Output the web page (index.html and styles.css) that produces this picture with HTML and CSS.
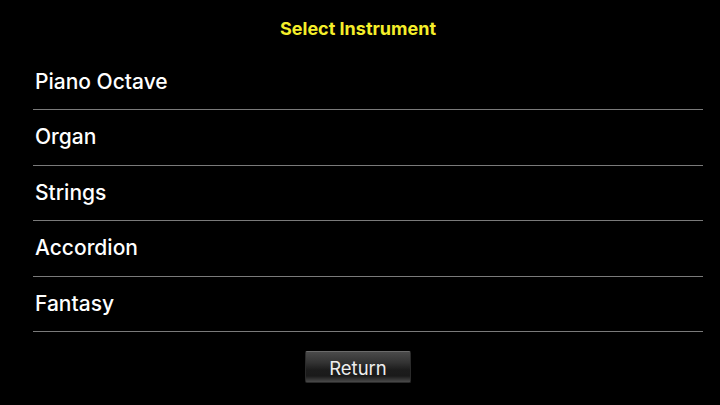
FILE: index.html
```html
<!DOCTYPE html>
<html>
<head>
<meta charset="utf-8">
<link rel="stylesheet" href="styles.css">
</head>
<body>
<div class="screen">
  <header class="title">Select Instrument</header>
  <ul class="list">
    <li class="row">Piano Octave</li>
    <li class="row">Organ</li>
    <li class="row">Strings</li>
    <li class="row">Accordion</li>
    <li class="row">Fantasy</li>
  </ul>
  <div class="actions">
    <button class="btn">Return</button>
  </div>
</div>
</body>
</html>
```

FILE: styles.css
```css
html, body {
  margin: 0;
  padding: 0;
  background: #000;
}
.screen {
  width: 720px;
  height: 405px;
  background: #000;
  font-family: "Inter", "Liberation Sans", sans-serif;
  display: flex;
  flex-direction: column;
}
.title {
  height: 54.5px;
  flex-shrink: 0;
  display: flex;
  align-items: center;
  justify-content: center;
  color: #f5ee2a;
  font-weight: 700;
  font-size: 18px;
  padding-top: 3px;
  padding-right: 4px;
  box-sizing: border-box;
}
.list {
  list-style: none;
  margin: 0 17px 0 33px;
  padding: 0;
}
.row {
  height: 55.5px;
  box-sizing: border-box;
  border-bottom: 1px solid #7a7a7a;
  color: #fff;
  font-size: 21px;
  font-weight: 500;
  display: flex;
  align-items: center;
  padding-left: 2px;
  padding-bottom: 1px;
}
.actions {
  display: flex;
  justify-content: center;
  padding-top: 18.5px;
}
.btn {
  width: 106px;
  height: 32px;
  margin-left: -4px;
  border: 1px solid #2a2a2a;
  border-top-color: #6a6a6a;
  border-radius: 2px;
  background: linear-gradient(to bottom, #4a4a4a 0%, #333 35%, #1c1c1c 60%, #1a1a1a 80%, #4a4a4a 100%);
  color: #eee;
  font-family: "Inter", "Liberation Sans", sans-serif;
  font-size: 18.5px;
  font-weight: 400;
  padding: 2px 0 0 0;
}
```
